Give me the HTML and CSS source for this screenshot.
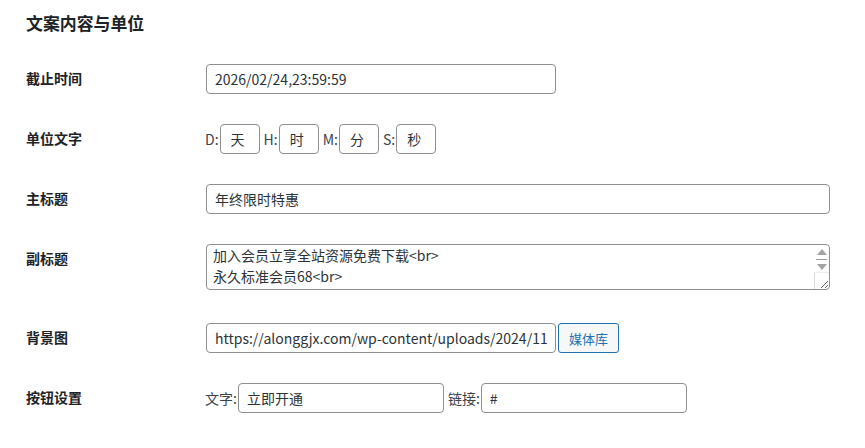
FILE: index.html
```html
<!DOCTYPE html>
<html lang="zh-CN">
<head>
<meta charset="utf-8">
<title>文案内容与单位</title>
<link rel="stylesheet" href="styles.css">
</head>
<body>
<div class="panel">
  <h2 class="title">文案内容与单位</h2>
  <div class="form">
    <div class="row">
      <div class="label">截止时间</div>
      <div class="field"><input class="input regular" type="text" value="2026/02/24,23:59:59"></div>
    </div>
    <div class="row">
      <div class="label">单位文字</div>
      <div class="field units">
        <span class="unit">D:</span><input class="input small" type="text" value="天">
        <span class="unit">H:</span><input class="input small" type="text" value="时">
        <span class="unit">M:</span><input class="input small" type="text" value="分">
        <span class="unit">S:</span><input class="input small" type="text" value="秒">
      </div>
    </div>
    <div class="row">
      <div class="label">主标题</div>
      <div class="field"><input class="input large" type="text" value="年终限时特惠"></div>
    </div>
    <div class="row row-area">
      <div class="label">副标题</div>
      <div class="field">
        <div class="areawrap">
          <textarea class="area" rows="2">加入会员立享全站资源免费下载&lt;br&gt;
永久标准会员68&lt;br&gt;
年度会员38&lt;br&gt;</textarea>
          <div class="scrollbar" aria-hidden="true">
            <div class="sb-btn sb-up"><span class="tri-up"></span></div>
            <div class="sb-thumb"><span></span></div>
            <div class="sb-btn sb-down"><span class="tri-down"></span></div>
            <div class="sb-corner"></div>
          </div>
        </div>
      </div>
    </div>
    <div class="row">
      <div class="label">背景图</div>
      <div class="field media"><input class="input regular" type="text" value="https://alonggjx.com/wp-content/uploads/2024/11/bg.png"><button class="button" type="button">媒体库</button></div>
    </div>
    <div class="row">
      <div class="label">按钮设置</div>
      <div class="field units">
        <span class="unit">文字:</span><input class="input medium" type="text" value="立即开通">
        <span class="unit">链接:</span><input class="input medium" type="text" value="#">
      </div>
    </div>
  </div>
</div>
</body>
</html>
```

FILE: styles.css
```css
html, body {
  margin: 0;
  padding: 0;
  background: #ffffff;
}
body {
  font-family: "Noto Sans CJK SC", "Noto Sans", sans-serif;
  font-size: 14px;
  color: #1d2327;
}
.panel {
  padding: 0 0 0 26px;
}
.title {
  margin: 0;
  padding-top: 11px;
  height: 38px;
  font-size: 16.9px;
  line-height: 24px;
  font-weight: 700;
  color: #1d2327;
}
.row {
  display: grid;
  grid-template-columns: 180px 1fr;
  align-items: start;
}
.label {
  padding: 20px 0;
  line-height: 18px;
  font-weight: 700;
  color: #1d2327;
}
.field {
  padding: 15px 0;
  display: flex;
  align-items: center;
}
.input {
  box-sizing: border-box;
  height: 30px;
  margin: 0;
  padding: 0 8px;
  border: 1px solid #8c8f94;
  border-radius: 4px;
  background: #fff;
  font-family: "Noto Sans CJK SC", "Noto Sans", sans-serif;
  font-size: 14px;
  color: #2c3338;
  outline: none;
}
.regular { width: 350px; }
.large { width: 624px; }
.small { width: 40px; padding: 0 0 0 10px; }
.medium { width: 206px; }
.units .unit {
  color: #3c434a;
  margin-right: 1px;
}
.units .input + .unit {
  margin-left: 4px;
}
.unit:first-child { margin-left: -1px; }
.areawrap {
  position: relative;
  width: 624px;
}
.area {
  box-sizing: border-box;
  display: block;
  width: 624px;
  height: 46px;
  margin: 0 0 3px 0;
  padding: 0 22px 0 6px;
  border: 1px solid #8c8f94;
  border-radius: 4px;
  background: #fff;
  font-family: "Noto Sans CJK SC", "Noto Sans", sans-serif;
  font-size: 14px;
  line-height: 21px;
  color: #2c3338;
  resize: both;
  overflow: hidden;
  outline: none;
}
.scrollbar {
  position: absolute;
  top: 1px;
  right: 1px;
  width: 15px;
  height: 44px;
  display: flex;
  flex-direction: column;
  pointer-events: none;
}
.sb-btn {
  display: flex;
  align-items: center;
  justify-content: center;
}
.sb-up { height: 13px; }
.sb-down { height: 11px; }
.tri-up {
  width: 0;
  height: 0;
  border-left: 5px solid transparent;
  border-right: 5px solid transparent;
  border-bottom: 6px solid #a3a3a3;
}
.tri-down {
  width: 0;
  height: 0;
  border-left: 5px solid transparent;
  border-right: 5px solid transparent;
  border-top: 6px solid #a3a3a3;
}
.sb-thumb {
  height: 3px;
  display: flex;
  justify-content: center;
}
.sb-thumb span {
  margin-top: 1px;
  width: 11px;
  height: 1px;
  background: #9a9a9a;
}
.sb-corner {
  flex: 1;
  border-left: 1px solid #dcdcde;
  border-top: 1px solid #ececec;
}
.media .button {
  margin-left: 2px;
}
.button {
  box-sizing: border-box;
  height: 30px;
  width: 61px;
  padding: 0 10px;
  border: 1px solid #2271b1;
  border-radius: 3px;
  background: #f6f7f7;
  color: #2271b1;
  font-family: "Noto Sans CJK SC", "Noto Sans", sans-serif;
  font-size: 13px;
  cursor: pointer;
}
```
